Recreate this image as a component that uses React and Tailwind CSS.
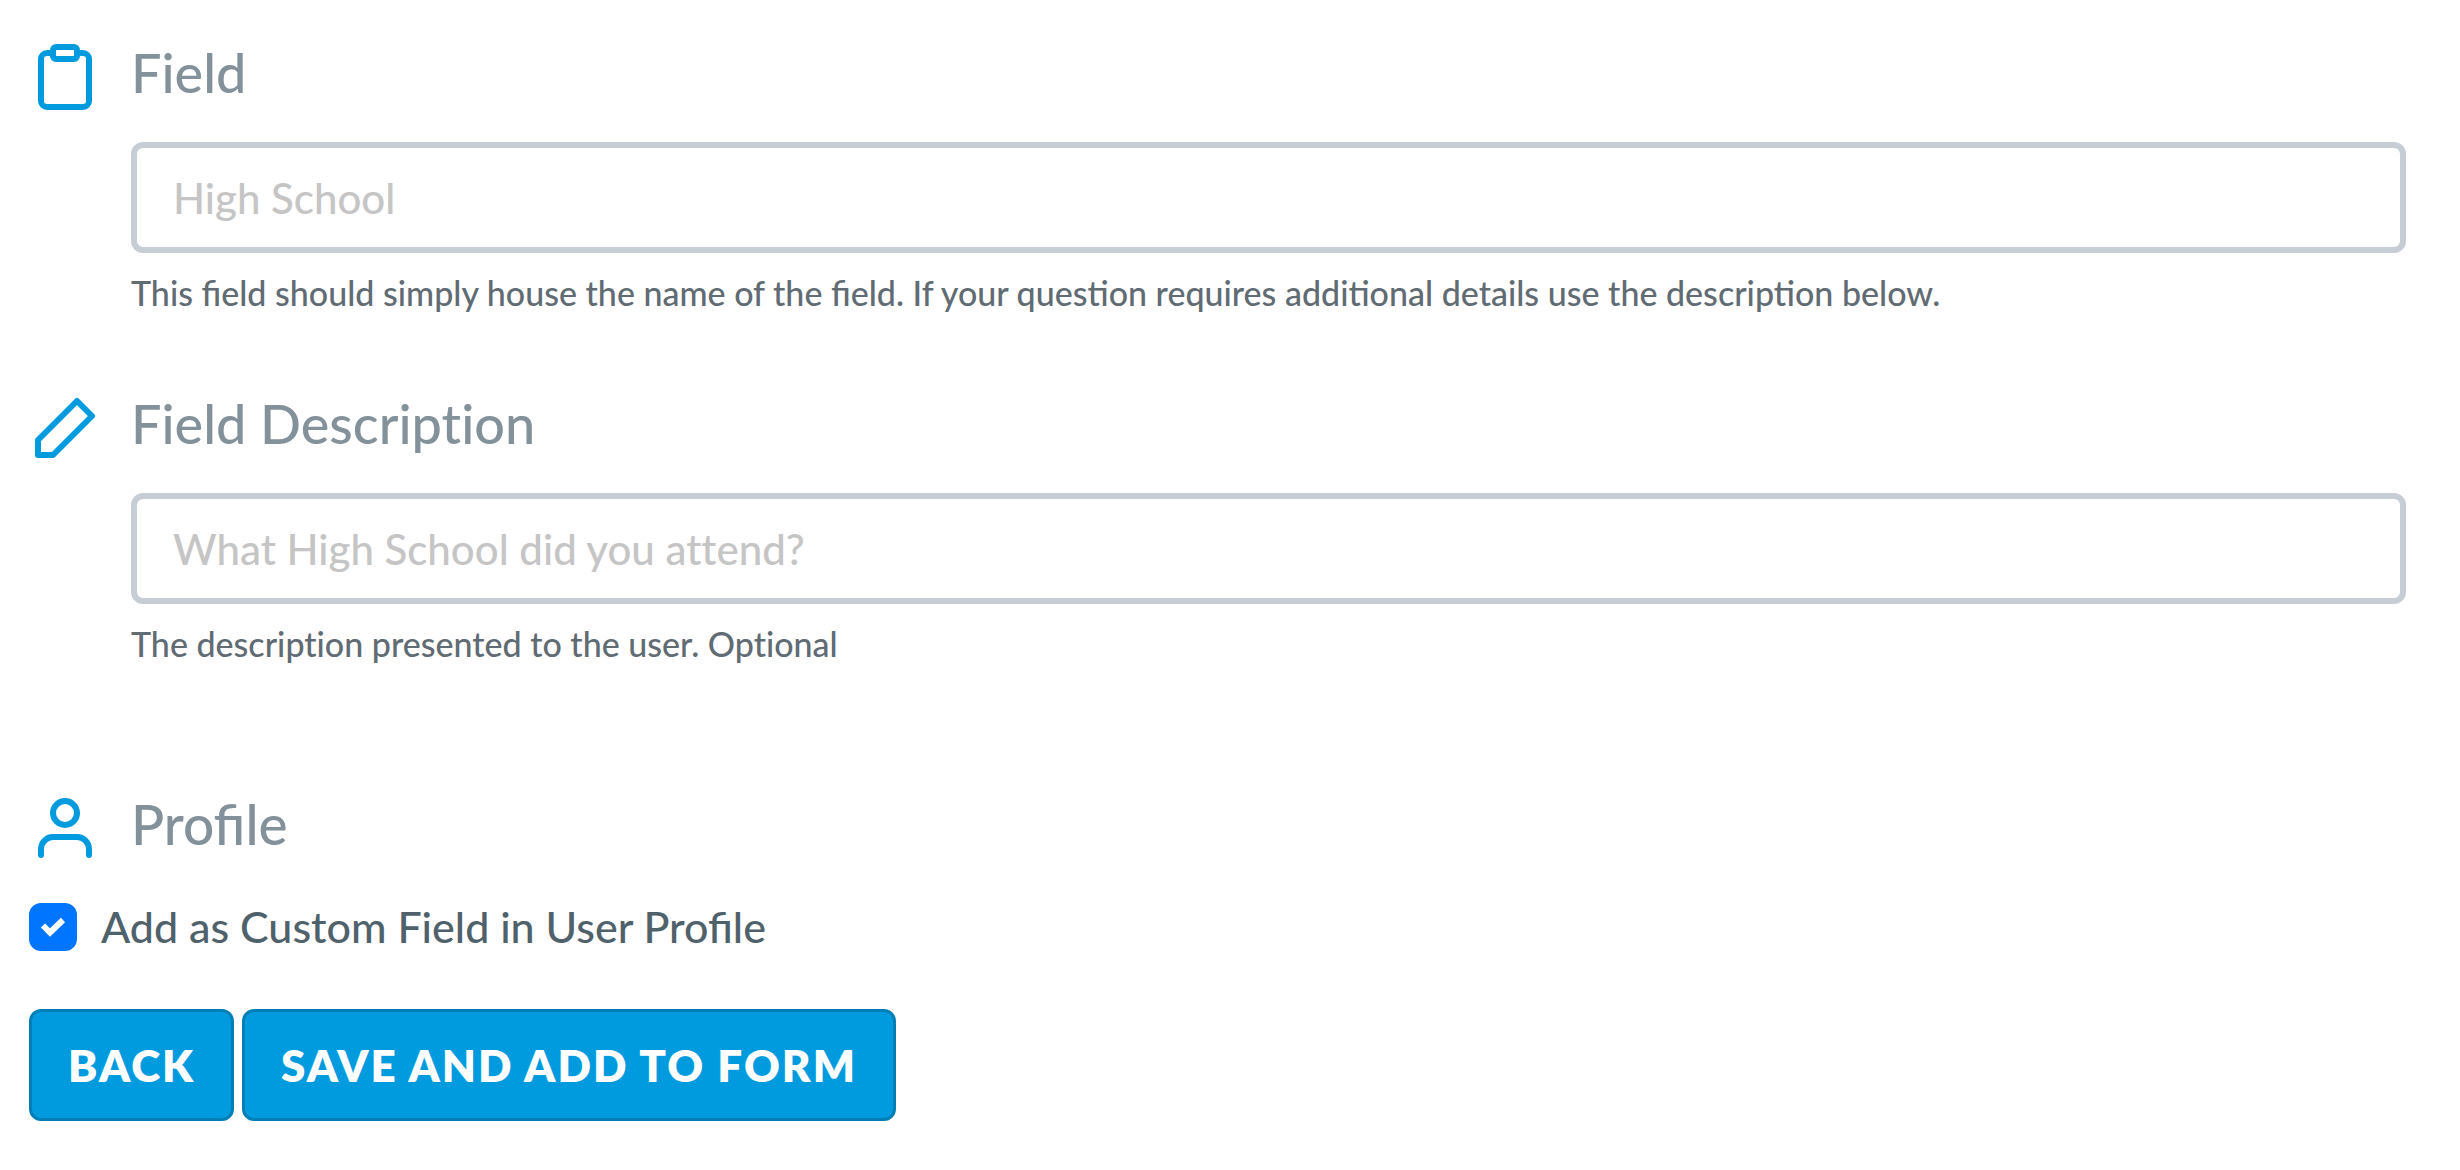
import { FiClipboard, FiUser } from "react-icons/fi";

const PencilIcon = () => (
  <svg
    className="size-[72px]"
    viewBox="0 0 24 24"
    fill="none"
    stroke="currentColor"
    strokeWidth="2"
    strokeLinecap="round"
    strokeLinejoin="round"
    aria-hidden="true"
  >
    <polygon points="16 3 21 8 8 21 3 21 3 16 16 3" />
  </svg>
);

const SectionHeader = ({ icon, children }) => (
  <div className="flex items-start gap-[30px]">
    <div className="mt-[5px] flex-none text-[#009bde]">{icon}</div>
    {children}
  </div>
);

const TextField = ({ id, label, icon, placeholder, help, helpClass = "" }) => (
  <div>
    <SectionHeader icon={icon}>
      <label
        htmlFor={id}
        className="text-[54px] leading-[74px] text-[#83919a] [font-variant-ligatures:none]"
      >
        {label}
      </label>
    </SectionHeader>
    <div className="mt-[29px] ml-[102px]">
      <input
        id={id}
        type="text"
        placeholder={placeholder}
        aria-describedby={`${id}-help`}
        className="block h-[111px] w-full rounded-xl border-6 border-[#c6cdd4] px-9 text-[42px] text-[#4f626b] [font-variant-ligatures:none] placeholder:text-[#c5c5c5]"
      />
      <p id={`${id}-help`} className={`mt-[18px] text-[34px] leading-[44px] text-[#606b73] ${helpClass}`}>
        {help}
      </p>
    </div>
  </div>
);

const Button = ({ type = "button", children }) => (
  <button
    type={type}
    className="h-28 rounded-xl border-3 border-[#007fb6] bg-[#009bde] px-9 text-[44px] font-extrabold tracking-[2px] text-white uppercase"
  >
    {children}
  </button>
);

const App = () => {
  return (
    <form className="pt-9 pr-[54px] pb-12 pl-[29px] font-['Lato',sans-serif] font-medium">
      <TextField
        id="field"
        label="Field"
        icon={<FiClipboard size={72} />}
        placeholder="High School"
        help="This field should simply house the name of the field. If your question requires additional details use the description below."
      />

      <div className="mt-18">
        <TextField
          id="description"
          label="Field Description"
          icon={<PencilIcon />}
          placeholder="What High School did you attend?"
          help="The description presented to the user. Optional"
          helpClass="[font-variant-ligatures:none]"
        />
      </div>

      {/* Profile */}
      <div className="mt-[121px]">
        <SectionHeader icon={<FiUser size={72} />}>
          <h2 className="text-[55px] leading-[74px] text-[#83919a]">Profile</h2>
        </SectionHeader>
        <div className="mt-[39px] flex items-center gap-6">
          <div className="relative size-12 flex-none">
            <input
              id="custom-field"
              type="checkbox"
              defaultChecked
              className="peer block size-12 appearance-none rounded-xl border-2 border-[#767676] checked:border-[#0075ff] checked:bg-[#0075ff]"
            />
            <svg
              className="pointer-events-none absolute inset-0 hidden size-12 peer-checked:block"
              viewBox="0 0 48 48"
              fill="none"
              stroke="white"
              strokeWidth="6"
              aria-hidden="true"
            >
              <path d="M14 22.5l7 7L34 17" />
            </svg>
          </div>
          <label htmlFor="custom-field" className="text-[43px] leading-12 text-[#4f626b]">
            Add as Custom Field in User Profile
          </label>
        </div>
      </div>

      <div className="mt-[58px] flex gap-2">
        <Button>Back</Button>
        <Button type="submit">Save and add to form</Button>
      </div>
    </form>
  );
};

export default App;
